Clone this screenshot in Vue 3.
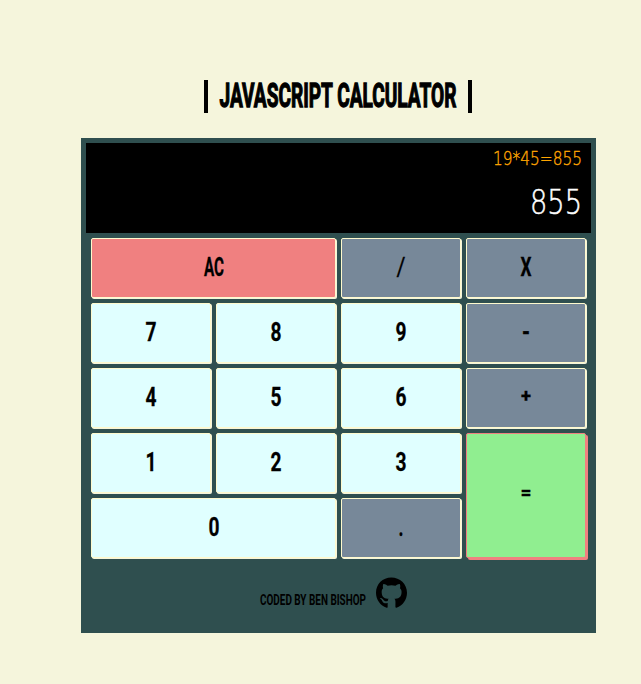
<script setup>
const keys = [
  { id: 'clear', label: 'AC', kind: 'clear', w: 20 },
  { id: 'divide', label: '/', kind: 'op slash', w: 9 },
  { id: 'multiply', label: 'X', kind: 'op', w: 11 },
  { id: 'seven', label: '7', kind: 'num', w: 11 },
  { id: 'eight', label: '8', kind: 'num', w: 11 },
  { id: 'nine', label: '9', kind: 'num', w: 11 },
  { id: 'subtract', label: '-', kind: 'op', w: 8 },
  { id: 'four', label: '4', kind: 'num', w: 11 },
  { id: 'five', label: '5', kind: 'num', w: 11 },
  { id: 'six', label: '6', kind: 'num', w: 11 },
  { id: 'add', label: '+', kind: 'op small', w: 10, y: 21 },
  { id: 'one', label: '1', kind: 'num', w: 11 },
  { id: 'two', label: '2', kind: 'num', w: 11 },
  { id: 'three', label: '3', kind: 'num', w: 11 },
  { id: 'equals', label: '=', kind: 'equals small', w: 11, y: 20 },
  { id: 'zero', label: '0', kind: 'num wide', w: 11 },
  { id: 'decimal', label: '.', kind: 'op', w: 5 },
]
</script>

<template>
  <main class="page">
    <h1 class="title">
      <svg width="273" height="42" viewBox="0 0 273 42">
        <rect x="2" y="4" width="4" height="33" />
        <text x="17.500" y="31" textLength="237" lengthAdjust="spacingAndGlyphs">JAVASCRIPT CALCULATOR</text>
        <rect x="266" y="4" width="4" height="33" />
      </svg>
    </h1>
    <section class="calculator">
      <div class="screen">
        <svg class="formula" width="100" height="26" viewBox="0 0 100 26">
          <text x="6" y="19" textLength="89" lengthAdjust="spacingAndGlyphs">19*45=855</text>
        </svg>
        <svg class="result" width="62" height="42" viewBox="0 0 62 42">
          <text x="5" y="33" textLength="52" lengthAdjust="spacingAndGlyphs">855</text>
        </svg>
      </div>
      <div class="keys">
        <button v-for="k in keys" :key="k.id" :class="['key', k.kind]">
          <svg width="30" height="34" viewBox="0 0 30 34">
            <text x="15" :y="k.y || 25" text-anchor="middle" :textLength="k.w" lengthAdjust="spacingAndGlyphs">{{ k.label }}</text>
          </svg>
        </button>
      </div>
      <footer class="credit">
        <svg class="author" width="106" height="20" viewBox="0 0 106 20">
          <text x="0" y="16" textLength="106" lengthAdjust="spacingAndGlyphs">CODED BY BEN BISHOP</text>
        </svg>
        <svg class="github" width="31" height="32" viewBox="0 0 496 512">
          <path d="M244.800 8C106.100 8 0 113.300 0 252c0 110.900 69.800 205.800 169.500 239.200 12.800 2.300 17.300-5.600 17.300-12.100 0-6.200-.3-40.400-.3-61.400 0 0-70 15-84.700-29.800 0 0-11.400-29.100-27.800-36.600 0 0-22.900-15.700 1.600-15.400 0 0 24.900 2 38.600 25.800 21.900 38.600 58.600 27.500 72.900 20.900 2.300-16 8.800-27.100 16-33.700-55.900-6.200-112.300-14.300-112.300-110.500 0-27.500 7.600-41.300 23.600-58.900-2.600-6.500-11.100-33.300 2.600-67.900 20.900-6.500 69 27 69 27 20-5.600 41.500-8.500 62.800-8.500s42.800 2.900 62.800 8.500c0 0 48.100-33.600 69-27 13.700 34.700 5.200 61.400 2.600 67.900 16 17.700 25.800 31.500 25.800 58.900 0 96.500-58.900 104.200-114.800 110.500 9.200 7.900 17 22.900 17 46.400 0 33.700-.3 75.400-.3 83.600 0 6.500 4.600 14.400 17.300 12.100C428.200 457.800 496 362.900 496 252 496 113.300 383.500 8 244.800 8z" />
        </svg>
      </footer>
    </section>
  </main>
</template>

<style>
body {
  background: #f5f5dc;
}
</style>

<style scoped>
.page {
  box-sizing: border-box;
  min-height: 684px;
  padding: 76px 45px 51px 81px;
  font-family: Roboto, "Liberation Sans", sans-serif;
  color: #000;
}
svg {
  display: block;
  overflow: visible;
}
.title {
  display: flex;
  justify-content: center;
  margin: 0 0 20px;
}
.title text {
  font-size: 32.500px;
  font-weight: 700;
  stroke: #000;
  stroke-width: 1.300px;
}
.calculator {
  box-sizing: border-box;
  width: 515px;
  height: 495px;
  padding: 5px;
  background: #2f4f4f;
}
.screen {
  box-sizing: border-box;
  display: flex;
  flex-direction: column;
  align-items: flex-end;
  gap: 9px;
  height: 90px;
  padding: 3px 4px 0;
  background: #000;
}
.screen text {
  font-family: "DejaVu Sans", sans-serif;
  font-weight: 200;
}
.formula {
  fill: #ffa500;
  stroke: #ffa500;
  stroke-width: 0.400px;
}
.formula text {
  font-size: 20px;
}
.result {
  fill: #fff;
  stroke: #fff;
  stroke-width: 0.500px;
}
.result text {
  font-size: 33px;
}
.keys {
  display: grid;
  grid-template-columns: repeat(4, 120px);
  grid-auto-rows: 60px;
  gap: 5px;
  padding: 5px;
}
.key {
  display: flex;
  align-items: center;
  justify-content: center;
  padding: 0;
  border: 1px solid #fffacd;
  border-radius: 2px;
  box-shadow: 1px 1px #f5f5dc;
}
.key text {
  font-family: Roboto, "Liberation Sans", sans-serif;
  font-size: 26px;
  font-weight: 700;
  stroke: #000;
  stroke-width: 0.300px;
}
.slash text {
  font-weight: 400;
}
.small text {
  font-size: 19px;
}
.num {
  background: #e0ffff;
}
.op {
  background: #778899;
}
.clear {
  grid-column: span 2;
  background: #f08080;
}
.wide {
  grid-column: span 2;
}
.equals {
  grid-row: span 2;
  background: #90ee90;
  border-color: #f08080;
  box-shadow: 2px 2px #f08080;
}
.credit {
  display: flex;
  justify-content: center;
  gap: 10px;
  padding-top: 14px;
  padding-right: 10px;
}
.author {
  margin-top: 12px;
}
.author text {
  font-size: 15.500px;
  font-weight: 700;
}
</style>
